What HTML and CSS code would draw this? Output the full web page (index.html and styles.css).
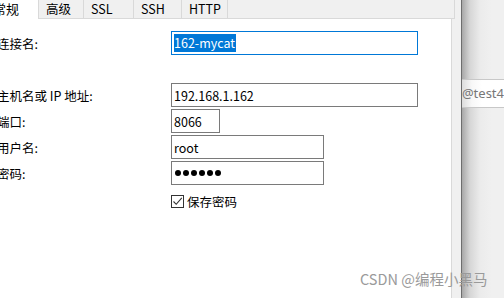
FILE: index.html
```html
<!DOCTYPE html>
<html lang="zh-CN">
<head>
  <meta charset="UTF-8">
  <title>连接属性</title>
  <link rel="stylesheet" href="styles.css">
</head>
<body>
  <div class="dialog">
    <div class="tabs">
      <div class="tab active">常规</div>
      <div class="tab">高级</div>
      <div class="tab">SSL</div>
      <div class="tab">SSH</div>
      <div class="tab">HTTP</div>
      <div class="tab-rest"></div>
    </div>
    <div class="panel">
      <div class="form-row first">
        <label>连接名:</label>
        <div class="field wide focused"><span class="selected">162-mycat</span></div>
      </div>
      <div class="form-row spaced">
        <label>主机名或 IP 地址:</label>
        <div class="field wide">192.168.1.162</div>
      </div>
      <div class="form-row">
        <label>端口:</label>
        <div class="field short">8066</div>
      </div>
      <div class="form-row">
        <label>用户名:</label>
        <div class="field mid">root</div>
      </div>
      <div class="form-row">
        <label>密码:</label>
        <div class="field mid dots">
          <i></i><i></i><i></i><i></i><i></i><i></i>
        </div>
      </div>
      <div class="form-row check-row">
        <label></label>
        <div class="check">
          <span class="box">
            <svg width="11" height="11" viewBox="0 0 11 11"><path d="M1.5 5.5 L4.2 8.3 L9.8 1.8" fill="none" stroke="#333" stroke-width="1.1"/></svg>
          </span>
          保存密码
        </div>
      </div>
    </div>
  </div>
  <div class="side">
    <div class="side-row">@test4</div>
  </div>
  <div class="watermark">CSDN @编程小黑马</div>
</body>
</html>
```
FILE: styles.css
```css
body {
  margin: 0;
  display: flex;
  height: 298px;
  overflow: hidden;
  font-family: "Noto Sans CJK SC", "Microsoft YaHei", sans-serif;
  font-size: 12.5px;
  color: #000;
  background: #f0f0f0;
}
.dialog {
  width: 461px;
  display: flex;
  flex-direction: column;
  background: #f0f0f0;
}
.tabs {
  display: flex;
  height: 19px;
  margin-left: -10px;
}
.tab {
  height: 18px;
  line-height: 17px;
  padding: 0 7px;
  border-right: 1px solid #d9d9d9;
  border-bottom: 1px solid #d9d9d9;
  background: #f0f0f0;
}
.tab.active {
  background: #fff;
  border-bottom-color: #fff;
  border-right: none;
  height: 19px;
  padding: 0 19px 0 3px;
  font-size: 13px;
}
.tab:nth-child(2) {
  width: 30px;
  border-left: 1px solid #d9d9d9;
}
.tab:nth-child(3) { width: 35px; }
.tab:nth-child(4) { width: 33px; }
.tab:nth-child(5) { width: 31px; }
.tab-rest {
  width: 226px;
  border-bottom: 1px solid #d9d9d9;
  border-right: 1px solid #d9d9d9;
  height: 18px;
}
.panel {
  flex: 1;
  width: 452px;
  background: #fff;
  border-right: 1px solid #d9d9d9;
  box-sizing: border-box;
  display: flex;
  flex-direction: column;
  gap: 2px;
  padding-top: 12px;
}
.form-row {
  display: flex;
  align-items: center;
}
.form-row.spaced {
  margin-top: 26px;
}
.form-row label {
  width: 174px;
  margin-left: -3px;
  flex-shrink: 0;
}
.field {
  height: 24px;
  box-sizing: border-box;
  border: 1px solid #7a7a7a;
  padding: 0 2px;
  line-height: 21px;
  display: flex;
  align-items: center;
}
.field.wide { width: 247px; }
.field.short { width: 49px; }
.field.mid { width: 153px; }
.field.focused {
  border-color: #0078d7;
}
.selected {
  background: #0078d7;
  color: #fff;
  line-height: 18px;
  padding-right: 1px;
}
.dots {
  gap: 2px;
  padding-left: 3px;
}
.dots i {
  width: 6px;
  height: 6px;
  border-radius: 50%;
  background: #000;
}
.check-row {
  margin-top: 5px;
}
.check {
  display: flex;
  align-items: center;
  gap: 3px;
}
.box {
  width: 13px;
  height: 13px;
  box-sizing: border-box;
  border: 1px solid #333;
  display: flex;
  align-items: center;
  justify-content: center;
}
.side {
  flex: 1;
  border-left: 1px solid #6e6e6e;
  background: linear-gradient(to right, #a8a8a8 0px, #d6d6d6 8px, #ebebeb 18px, #f0f0f0 30px);
  padding-top: 79px;
}
.side-row {
  height: 29px;
  box-sizing: border-box;
  border-top: 1px solid #c8c8c8;
  border-bottom: 1px solid #c8c8c8;
  background: linear-gradient(to right, #dcdcdc 0px, #f8f8f8 10px, #fff 20px);
  color: #777;
  line-height: 27px;
  font-family: "Noto Sans", sans-serif;
  font-size: 13px;
}
.watermark {
  position: absolute;
  left: 360px;
  top: 268px;
  font-size: 14.5px;
  color: #9a9a9a;
  font-family: "Noto Sans CJK SC", sans-serif;
}
```
